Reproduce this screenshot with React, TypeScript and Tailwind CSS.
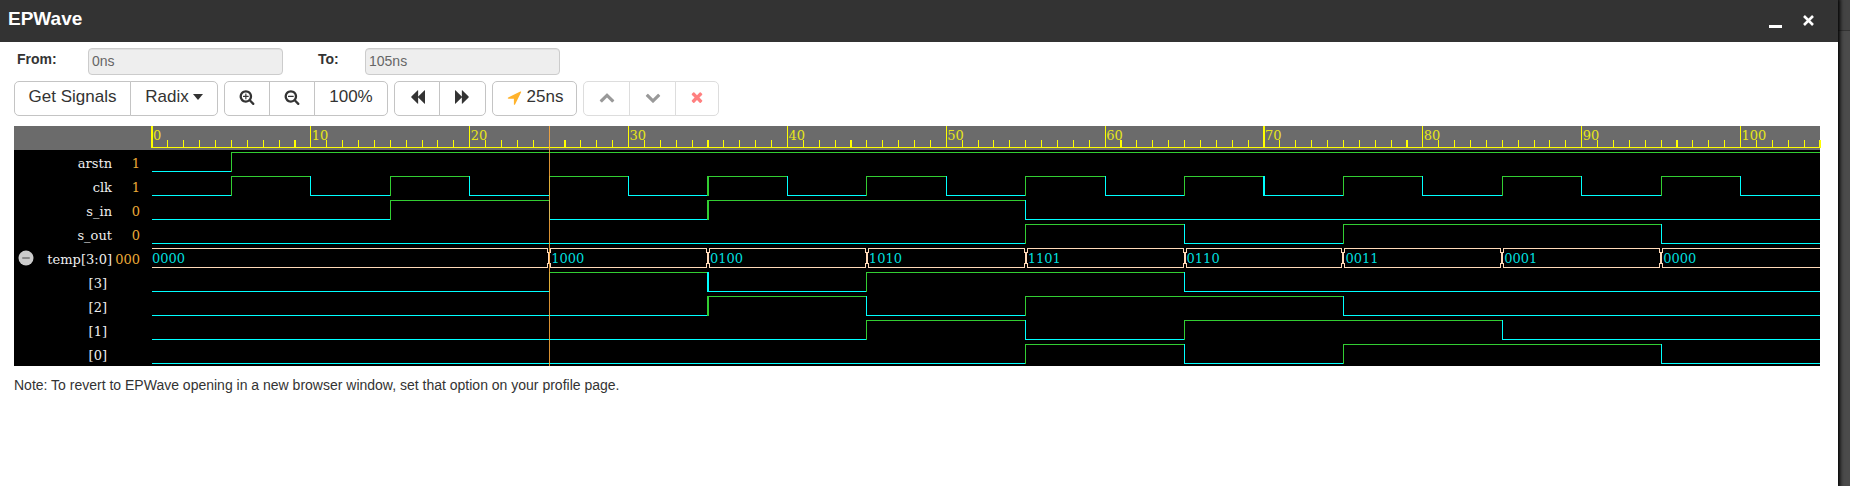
import { type ReactNode } from "react";

const END = 105;
const HIGH = 2;
const LOW = 21;

const pct = (t: number) => `${(t / END) * 100}%`;

type Edge = [time: number, level: 0 | 1];
type BusValue = [time: number, value: string];

interface Signal {
  name: string;
  value: string;
  child?: boolean;
  edges?: Edge[];
  bus?: BusValue[];
}

const clock: Edge[] = Array.from({ length: 21 }, (_, i): Edge => [i * 5, i % 2 ? 1 : 0]);

const signals: Signal[] = [
  { name: "arstn", value: "1", edges: [[0, 0], [5, 1]] },
  { name: "clk", value: "1", edges: clock },
  { name: "s_in", value: "0", edges: [[0, 0], [15, 1], [25, 0], [35, 1], [55, 0]] },
  { name: "s_out", value: "0", edges: [[0, 0], [55, 1], [65, 0], [75, 1], [95, 0]] },
  {
    name: "temp[3:0]",
    value: "000",
    bus: [
      [0, "0000"], [25, "1000"], [35, "0100"], [45, "1010"], [55, "1101"],
      [65, "0110"], [75, "0011"], [85, "0001"], [95, "0000"],
    ],
  },
  { name: "[3]", value: "", child: true, edges: [[0, 0], [25, 1], [35, 0], [45, 1], [65, 0]] },
  { name: "[2]", value: "", child: true, edges: [[0, 0], [35, 1], [45, 0], [55, 1], [75, 0]] },
  { name: "[1]", value: "", child: true, edges: [[0, 0], [45, 1], [55, 0], [65, 1], [85, 0]] },
  { name: "[0]", value: "", child: true, edges: [[0, 0], [55, 1], [65, 0], [75, 1], [95, 0]] },
];

const LENS =
  "M1216 832q0-185-131.5-316.5t-316.5-131.5-316.5 131.5-131.5 316.5 131.5 316.5 316.5 131.5 316.5-131.5 131.5-316.5zm512 832q0 53-37.5 90.5t-90.5 37.5q-54 0-90-38l-343-342q-179 124-399 124-143 0-273.5-55.5t-225-150-150-225-55.5-273.5 55.5-273.5 150-225 225-150 273.5-55.5 273.5 55.5 225 150 150 225 55.5 273.5q0 220-124 399l343 343q37 37 37 90z";

const ICONS = {
  zoomIn:
    "M1088 800v64q0 13-9.5 22.5t-22.5 9.5h-224v224q0 13-9.5 22.5t-22.5 9.5h-64q-13 0-22.5-9.5t-9.5-22.5v-224h-224q-13 0-22.5-9.5t-9.5-22.5v-64q0-13 9.5-22.5t22.5-9.5h224v-224q0-13 9.5-22.5t22.5-9.5h64q13 0 22.5 9.5t9.5 22.5v224h224q13 0 22.5 9.5t9.5 22.5z" + LENS,
  zoomOut:
    "M1088 800v64q0 13-9.5 22.5t-22.5 9.5h-576q-13 0-22.5-9.5t-9.5-22.5v-64q0-13 9.5-22.5t22.5-9.5h576q13 0 22.5 9.5t9.5 22.5z" + LENS,
  backward:
    "M1747 141q19-19 32-13t13 32v1472q0 26-13 32t-32-13l-710-710q-9-9-13-19v710q0 26-13 32t-32-13l-710-710q-19-19-19-45t19-45l710-710q19-19 32-13t13 32v710q4-10 13-19z",
  forward:
    "M45 1651q-19 19-32 13t-13-32v-1472q0-26 13-32t32 13l710 710q9 9 13 19v-710q0-26 13-32t32 13l710 710q19 19 19 45t-19 45l-710 710q-19 19-32 13t-13-32v-710q-4 10-13 19z",
  arrow:
    "M1593 349l-640 1280q-17 35-57 35-5 0-15-2-22-5-35.5-22.5t-13.5-39.5v-576h-576q-22 0-39.5-13.5t-22.5-35.5 4-42 29-30l1280-640q13-7 29-7 27 0 45 19 15 14 18.5 34.5t-6.5 39.5z",
  up: "M1683 1331l-166 165q-19 19-45 19t-45-19l-531-531-531 531q-19 19-45 19t-45-19l-166-165q-19-19-19-45.5t19-45.5l742-741q19-19 45-19t45 19l742 741q19 19 19 45.5t-19 45.5z",
  down: "M1683 808l-742 741q-19 19-45 19t-45-19l-742-741q-19-19-19-45.5t19-45.5l166-165q19-19 45-19t45 19l531 531 531-531q19-19 45-19t45 19l166 165q19 19 19 45.5t-19 45.5z",
  remove:
    "M1490 1322q0 40-28 68l-136 136q-28 28-68 28t-68-28l-294-294-294 294q-28 28-68 28t-68-28l-136-136q-28-28-28-68t28-68l294-294-294-294q-28-28-28-68t28-68l136-136q28-28 68-28t68 28l294 294 294-294q28-28 68-28t68 28l136 136q28 28 28 68t-28 68l-294 294 294 294q28 28 28 68z",
};

function Icon({ name, className = "size-4" }: { name: keyof typeof ICONS; className?: string }) {
  return (
    <svg viewBox="0 0 1792 1792" fill="currentColor" fillRule="evenodd" className={className} aria-hidden="true">
      <path d={ICONS[name]} />
    </svg>
  );
}

function Group({ children }: { children: ReactNode }) {
  return <div className="flex -space-x-px">{children}</div>;
}

function ToolButton({
  children,
  label,
  width,
  disabled,
}: {
  children: ReactNode;
  label?: string;
  width: string;
  disabled?: boolean;
}) {
  return (
    <button
      type="button"
      aria-label={label}
      disabled={disabled}
      className={`flex h-[35px] items-center justify-center gap-1 border bg-white pb-[3px] text-[17px] leading-5 text-[#333] first:rounded-l-[5px] last:rounded-r-[5px] ${disabled ? "border-[#ddd]" : "border-[#c4c4c4]"} ${width}`}
    >
      {children}
    </button>
  );
}

function Field({ id, label, value, labelWidth }: { id: string; label: string; value: string; labelWidth: string }) {
  return (
    <div className="flex items-start">
      <label htmlFor={id} className={`text-sm leading-[22px] font-bold text-[#333] ${labelWidth}`}>
        {label}
      </label>
      <input
        id={id}
        readOnly
        defaultValue={value}
        className="h-[27px] w-[195px] rounded-[4px] border border-[#ccc] bg-[#eee] px-[3px] pb-[2px] text-sm text-[#666] inset-shadow-2xs"
      />
    </div>
  );
}

function Ruler() {
  return (
    <svg className="block h-6 w-full overflow-visible" shapeRendering="crispEdges">
      <line x1="0" x2="100%" y1="21.5" y2="21.5" stroke="#ff0" />
      {Array.from({ length: END + 1 }, (_, t) => (
        <line key={t} x1={pct(t)} x2={pct(t)} y1={t % 10 ? 14 : 0} y2="22" stroke="#ff0" strokeWidth="1.1" />
      ))}
      {Array.from({ length: 11 }, (_, i) => (
        <text key={i} x={pct(i * 10)} dx="1" y="14" fill="#e6e619" fontSize="13">
          {i * 10}
        </text>
      ))}
    </svg>
  );
}

function BitWave({ edges }: { edges: Edge[] }) {
  return (
    <svg className="block h-6 w-full overflow-visible" shapeRendering="crispEdges" strokeWidth="1.1">
      {edges.map(([t, level], i) => {
        const next = i + 1 < edges.length ? edges[i + 1][0] : END;
        const y = (level ? HIGH : LOW) + 0.5;
        const color = level ? "#32cd32" : "#0ff";
        return (
          <g key={t} stroke={color}>
            <line x1={pct(t)} x2={pct(next)} y1={y} y2={y} strokeWidth="1" />
            {i > 0 && <line x1={pct(t)} x2={pct(t)} y1={HIGH} y2={LOW + 1} />}
          </g>
        );
      })}
    </svg>
  );
}

function BusWave({ values }: { values: BusValue[] }) {
  return (
    <svg className="block h-6 w-full overflow-visible">
      <g stroke="#ffdab9" shapeRendering="crispEdges">
        <line x1="0" x2="100%" y1={HIGH + 0.5} y2={HIGH + 0.5} />
        <line x1="0" x2="100%" y1={LOW + 0.5} y2={LOW + 0.5} />
      </g>
      {values.map(([t, value], i) => (
        <svg key={t} x={pct(t)} className="overflow-visible">
          {i > 0 && (
            <g shapeRendering="crispEdges" fill="none" stroke="#ffdab9">
              <rect x="-1" y={HIGH} width="2" height="20" fill="#000" stroke="none" />
              <path d="M-1.5 2v4.5h1v11h-1v4.5M1.5 2v4.5h-1v11h1v4.5" />
            </g>
          )}
          <text x={i > 0 ? 2 : 0} y="17" fill="#00dede" fontSize="13">
            {value}
          </text>
        </svg>
      ))}
    </svg>
  );
}

function Viewer() {
  return (
    <div className="flex bg-black font-['DejaVu_Serif',serif] text-[13px] leading-6">
      <div className="w-[138px] shrink-0">
        <div className="h-6 bg-[#6b6b6b]" />
        {signals.map((s) => (
          <div key={s.name} className="flex h-6 items-center">
            <span className="flex w-6 justify-end pl-1">
              {s.bus && (
                <button type="button" aria-label="Collapse temp[3:0]" className="mr-1">
                  <svg viewBox="0 0 16 16" className="size-4">
                    <circle cx="8" cy="8" r="7.5" fill="#ccc" />
                    <rect x="4" y="7" width="8" height="2" rx="1" fill="#888" />
                  </svg>
                </button>
              )}
            </span>
            <span className={`flex-1 pt-1 text-right whitespace-nowrap text-[#eee] ${s.child ? "pr-[5px]" : ""}`}>{s.name}</span>
            <span className="w-7 pt-1 text-right text-[#eba937]">{s.value}</span>
            <span className="w-3" />
          </div>
        ))}
      </div>
      <div className="relative min-w-0 flex-1">
        <div className="bg-[#6b6b6b]">
          <Ruler />
        </div>
        {signals.map((s) => (s.bus ? <BusWave key={s.name} values={s.bus} /> : <BitWave key={s.name} edges={s.edges ?? []} />))}
        <svg className="pointer-events-none absolute inset-0 size-full" shapeRendering="crispEdges">
          <line x1={pct(25)} x2={pct(25)} y1="0" y2="100%" stroke="#ffa93a" strokeOpacity="0.85" />
        </svg>
      </div>
    </div>
  );
}

export default function App() {
  return (
    <div className="flex min-h-screen bg-[#4b4b4b] font-['Liberation_Sans',Arial,sans-serif] text-[#333]">
      <main className="z-10 min-w-0 flex-1 bg-white shadow-[0_0_4px_2px_#000]">
        <header className="flex h-[42px] items-center bg-[#333] pr-[22px] pl-2 text-white">
          <h1 className="pb-[5px] text-[19px] leading-6 font-bold">EPWave</h1>
          <div className="ml-auto flex gap-5">
            <button type="button" aria-label="Minimize">
              <svg viewBox="0 0 14 14" className="size-[14px]">
                <rect x="1" y="11" width="13" height="3" fill="#fff" />
              </svg>
            </button>
            <button type="button" aria-label="Close">
              <svg viewBox="0 0 14 14" className="size-[14px]">
                <path d="M2 2l9 9M11 2l-9 9" stroke="#fff" strokeWidth="2.6" />
              </svg>
            </button>
          </div>
        </header>
        <div className="px-[14px] pr-[18px]">
          <div className="flex gap-[35px] pt-[6px] pl-[3px]">
            <Field id="from" label="From:" value="0ns" labelWidth="w-[71px]" />
            <Field id="to" label="To:" value="105ns" labelWidth="w-[47px]" />
          </div>
          <div className="flex gap-[6px] pt-[6px] pb-[10px]">
            <Group>
              <ToolButton width="w-[117px]">Get Signals</ToolButton>
              <ToolButton width="w-[88px]">
                Radix
                <svg viewBox="0 0 10 6" className="h-[6px] w-[10px]" aria-hidden="true">
                  <path d="M0 0h10l-5 6z" fill="#333" />
                </svg>
              </ToolButton>
            </Group>
            <Group>
              <ToolButton width="w-[46px]" label="Zoom in"><Icon name="zoomIn" /></ToolButton>
              <ToolButton width="w-[46px]" label="Zoom out"><Icon name="zoomOut" /></ToolButton>
              <ToolButton width="w-[74px]">100%</ToolButton>
            </Group>
            <Group>
              <ToolButton width="w-[46px]" label="Previous edge"><Icon name="backward" /></ToolButton>
              <ToolButton width="w-[47px]" label="Next edge"><Icon name="forward" /></ToolButton>
            </Group>
            <Group>
              <ToolButton width="w-[85px]">
                <Icon name="arrow" className="size-[17px] text-[#ffb32c]" />
                25ns
              </ToolButton>
            </Group>
            <Group>
              <ToolButton disabled width="w-[47px]" label="Move up"><Icon name="up" className="size-4 text-[#999]" /></ToolButton>
              <ToolButton disabled width="w-[47px]" label="Move down"><Icon name="down" className="size-4 text-[#999]" /></ToolButton>
              <ToolButton disabled width="w-[44px]" label="Remove"><Icon name="remove" className="size-4 text-[#ff8080]" /></ToolButton>
            </Group>
          </div>
          <Viewer />
          <p className="pt-[9px] text-sm leading-5">
            Note: To revert to EPWave opening in a new browser window, set that option on your profile page.
          </p>
        </div>
      </main>
      <aside className="w-3 shrink-0">
        <div className="h-[31px] border-b border-[#333] bg-[#444]" />
      </aside>
    </div>
  );
}
